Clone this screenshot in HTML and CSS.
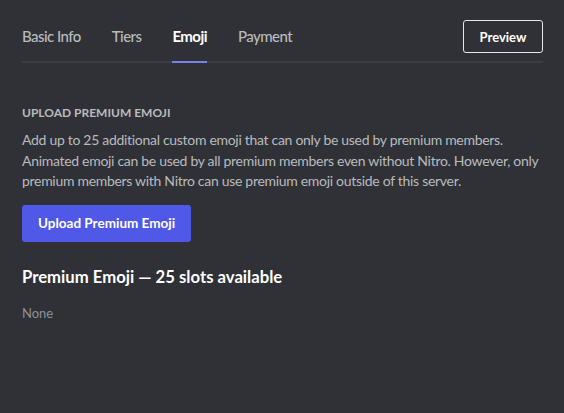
FILE: index.html
```html
<!DOCTYPE html>
<html>
<head>
<meta charset="utf-8">
<link rel="stylesheet" href="styles.css">
</head>
<body>
<div class="page">
  <div class="tabbar">
    <nav class="tabs">
      <span class="tab">Basic Info</span>
      <span class="tab">Tiers</span>
      <span class="tab active">Emoji</span>
      <span class="tab">Payment</span>
    </nav>
    <button class="preview">Preview</button>
  </div>
  <div class="divider"></div>
  <section class="section">
    <h2 class="eyebrow">Upload Premium Emoji</h2>
    <p class="desc">Add up to 25 additional custom emoji that can only be used by premium members. Animated emoji can be used by all premium members even without Nitro. However, only premium members with Nitro can use premium emoji outside of this server.</p>
    <button class="upload">Upload Premium Emoji</button>
    <h3 class="slots">Premium Emoji — 25 slots available</h3>
    <p class="none">None</p>
  </section>
</div>
</body>
</html>
```

FILE: styles.css
```css
* { box-sizing: border-box; }
html, body { margin: 0; height: 100%; }
body {
  background: #2f3136;
  font-family: Lato, "Noto Sans", sans-serif;
  color: #dcddde;
}
.page {
  padding: 0 21px 0 22px;
}
.tabbar {
  display: flex;
  align-items: center;
  justify-content: space-between;
  padding-top: 20px;
}
.tabs {
  display: flex;
  align-self: stretch;
}
.tab {
  font-size: 15px;
  font-weight: 500;
  letter-spacing: -0.55px;
  color: #b9bbbe;
  margin-right: 31px;
  padding-top: 7px;
  height: 43px;
  border-bottom: 2px solid transparent;
}
.tab.active {
  color: #ffffff;
  font-weight: 700;
  border-bottom-color: #7b7fe8;
}
.preview {
  width: 80px;
  height: 33px;
  background: transparent;
  border: 1px solid #e6e6e6;
  border-radius: 3px;
  color: #ffffff;
  font-family: inherit;
  font-size: 13px;
  font-weight: 700;
  align-self: flex-start;
}
.divider {
  height: 2px;
  background: #3b3d42;
  margin-top: -2px;
}
.section {
  padding-top: 42px;
}
.eyebrow {
  margin: 0;
  font-size: 12px;
  font-weight: 700;
  text-transform: uppercase;
  color: #b9bbbe;
  line-height: 16px;
}
.desc {
  margin: 9px 0 0;
  font-size: 14px;
  letter-spacing: -0.3px;
  line-height: 20.5px;
  color: #b9bbbe;
}
.upload {
  margin-top: 13px;
  height: 37px;
  padding: 0 16px;
  background: #5058e8;
  color: #fff;
  border: 0;
  border-radius: 3px;
  font-family: inherit;
  font-size: 13.5px;
  font-weight: 700;
}
.slots {
  margin: 25px 0 0;
  font-size: 16.7px;
  font-weight: 700;
  color: #ffffff;
  line-height: 20px;
}
.none {
  margin: 18px 0 0;
  font-size: 13px;
  color: #8e9297;
  line-height: 16px;
}
```
